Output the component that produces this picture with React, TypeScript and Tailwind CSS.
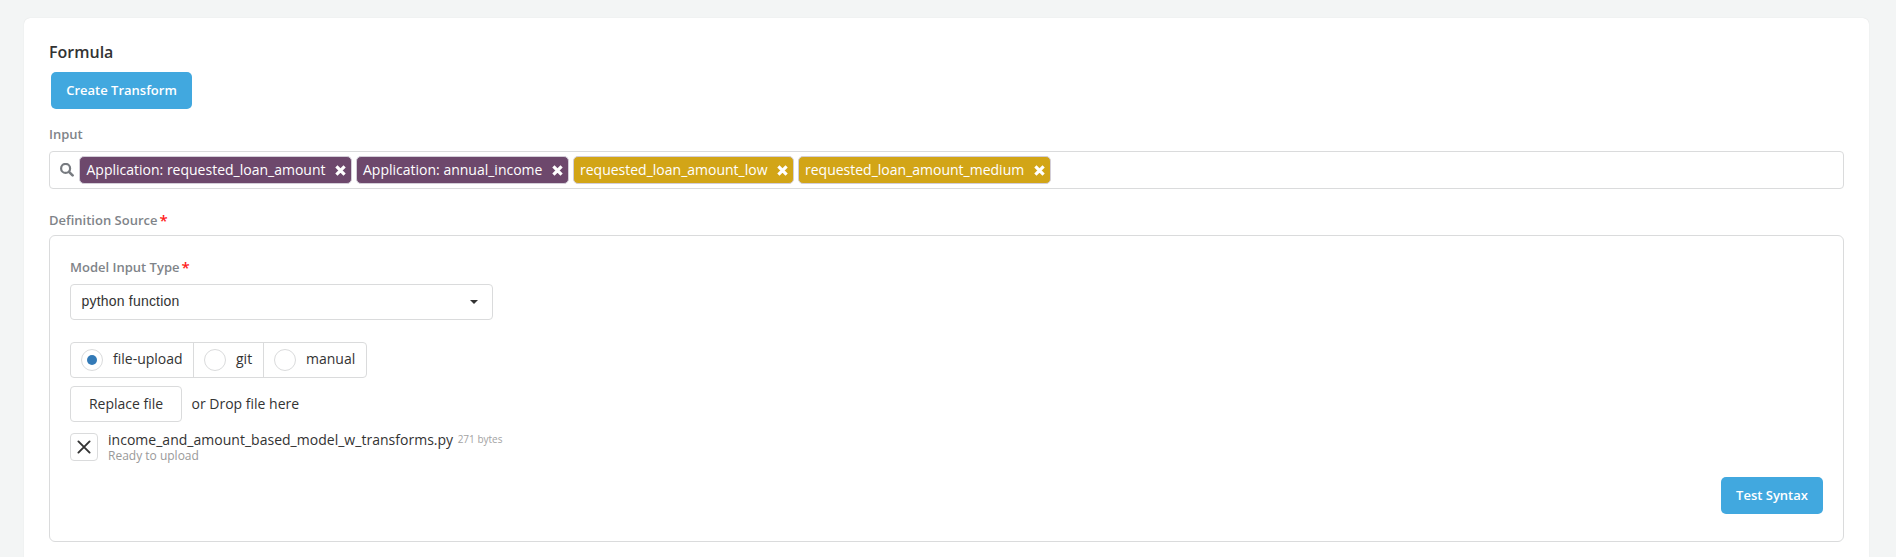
import type { ReactNode } from "react";

function Label({ children, required }: { children: ReactNode; required?: boolean }) {
  return (
    <div className="flex h-[18px] items-center text-[13px] leading-[18px] font-semibold text-[#7f8489]">
      {children}
      {required && <span className="ml-[2px] text-[15px] text-[#ff1a1a]">*</span>}
    </div>
  );
}

function Chip({ text, className }: { text: string; className: string }) {
  return (
    <div
      className={`flex h-7 shrink-0 items-center justify-between rounded-[5px] border border-[#d3ced8] pr-[5px] text-sm whitespace-nowrap text-white ${className}`}
    >
      <span>{text}</span>
      <svg viewBox="0 0 11 11" className="mt-px size-[11px]" fill="none" stroke="currentColor" strokeWidth="3.2">
        <path d="M1.4 1.4 9.6 9.6M9.6 1.4 1.4 9.6" />
      </svg>
    </div>
  );
}

function Radio({ label, checked, className }: { label: string; checked?: boolean; className: string }) {
  return (
    <label className={`flex items-center pl-[10px] ${className}`}>
      <span className="flex size-[22px] items-center justify-center rounded-full border border-[#dadbdc]">
        {checked && <span className="size-[10px] rounded-full bg-[#337ab7]" />}
      </span>
      <span className="mb-[2px] ml-[10px]">{label}</span>
    </label>
  );
}

export default function App() {
  return (
    <div className="h-[557px] overflow-hidden bg-[#f3f5f5] pt-[18px] pr-[27px] pl-6 font-['Open_Sans',sans-serif] text-sm text-[#333]">
      <main className="flex h-[560px] flex-col rounded-md bg-white pr-[25px] pl-[25px] shadow-[0_0_1px_rgba(0,0,0,0.15)]">
        <h2 className="mt-[23px] h-[22px] text-base leading-[22px] font-semibold text-[#333]">Formula</h2>
        <button className="mt-[9px] ml-[2px] h-[37px] w-[141px] rounded-[5px] bg-[#41a8df] text-[13px] font-semibold text-white">
          Create Transform
        </button>
        <div className="mt-[16px]">
          <Label>Input</Label>
        </div>
        <div className="mt-[8px] flex h-[38px] items-center gap-[4px] rounded border border-[#dadbdc] pl-[10px]">
          <svg viewBox="0 0 14 14" className="mr-[1px] size-[14px] text-[#777b80]" fill="none" stroke="currentColor">
            <circle cx="5.6" cy="5.4" r="4.5" strokeWidth="2.2" />
            <path d="M9 8.8 12.6 12.4" strokeWidth="2.6" strokeLinecap="round" />
          </svg>
          <Chip text="Application: requested_loan_amount" className="w-[273px] bg-[#6d486c] pl-[6.5px]" />
          <Chip text="Application: annual_income" className="w-[213px] bg-[#6d486c] pl-[6px]" />
          <Chip text="requested_loan_amount_low" className="w-[221px] bg-[#d2a517] pl-[6px]" />
          <Chip text="requested_loan_amount_medium" className="w-[253px] bg-[#d2a517] pl-[6px]" />
        </div>
        <div className="mt-[22px]">
          <Label required>Definition Source</Label>
        </div>
        <section className="mt-[6px] flex h-[307px] shrink-0 flex-col rounded-md border border-[#dadbdc] px-5">
          <div className="mt-[22px]">
            <Label required>Model Input Type</Label>
          </div>
          <div className="mt-[8px] flex h-9 w-[423px] items-center justify-between rounded border border-[#dadbdc] pr-[14px] pl-[10.5px] font-['Liberation_Sans',sans-serif] text-sm tracking-[0.2px]">
            <span className="mb-[2px]">python function</span>
            <svg viewBox="0 0 8 4" className="h-1 w-2" fill="currentColor">
              <path d="M0 0H8L4 4Z" />
            </svg>
          </div>
          <div className="mt-[22px] flex h-9 w-[297px] shrink-0 rounded border border-[#dadbdc]">
            <Radio label="file-upload" checked className="w-[123px] border-r border-[#dadbdc]" />
            <Radio label="git" className="w-[70px] border-r border-[#dadbdc]" />
            <Radio label="manual" className="w-[102px]" />
          </div>
          <div className="mt-2 flex items-center">
            <button className="h-9 w-[112px] rounded border border-[#dadbdc]">Replace file</button>
            <span className="ml-[9.5px]">or Drop file here</span>
          </div>
          <div className="mt-[11px] flex">
            <button className="flex size-7 items-center justify-center rounded border border-[#dadbdc]">
              <svg viewBox="0 0 14 14" className="size-[14px]" fill="none" stroke="#333" strokeWidth="1.9" strokeLinecap="round">
                <path d="M1.4 1.4 12.6 12.6M12.6 1.4 1.4 12.6" />
              </svg>
            </button>
            <div className="-mt-px ml-[10px]">
              <div className="flex h-4 items-center leading-4">
                <span className="tracking-[0.02px]">income_and_amount_based_model_w_transforms.py</span>
                <span className="mb-[2px] ml-[4.5px] text-[10px] text-[#a3a3a3]">271 bytes</span>
              </div>
              <div className="h-4 text-xs leading-4 text-[#999]">Ready to upload</div>
            </div>
          </div>
          <button className="mt-[13px] h-[37px] w-[102px] shrink-0 self-end rounded-[5px] bg-[#41a8df] text-[13px] font-semibold text-white">
            Test Syntax
          </button>
        </section>
      </main>
    </div>
  );
}
